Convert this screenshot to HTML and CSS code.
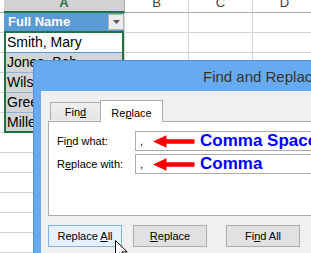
FILE: index.html
```html
<!DOCTYPE html>
<html>
<head>
<meta charset="utf-8">
<link rel="stylesheet" href="styles.css">
</head>
<body>
<div class="sheet">
  <div class="colhead">
    <div class="ch stub"></div>
    <div class="ch cha">A</div>
    <div class="ch chn">B</div>
    <div class="ch chn">C</div>
    <div class="ch chn">D</div>
  </div>
  <div class="rows">
    <div class="stubcol"></div>
    <div class="cola">
      <div class="thead"><span>Full Name</span><span class="dd"><svg width="7" height="4" viewBox="0 0 7 4"><path d="M0 0H7L3.5 4Z" fill="#5a5a5a"/></svg></span></div>
      <div class="sel">
        <div class="cell active">Smith, Mary</div>
        <div class="cell">Jones, Bob</div>
        <div class="cell">Wilson, Ann</div>
        <div class="cell">Greene, Tom</div>
        <div class="cell last">Miller, Sue</div>
      </div>
    </div>
    <div class="col"></div>
    <div class="col"></div>
    <div class="col"></div>
  </div>
</div>

<div class="dialog">
  <div class="titlebar">Find and Replace</div>
  <div class="dbody">
    <div class="tabs">
      <div class="tab">Fin<u>d</u></div>
      <div class="tab on">Re<u>p</u>lace</div>
    </div>
    <div class="panel">
      <div class="frow">
        <label class="lbl">Fi<u>n</u>d what:</label>
        <div class="inp">
          <span class="comma">,</span>
          <svg class="arrow" width="42" height="13" viewBox="0 0 42 13"><path d="M0 6.5L13.5 0.3V4.3H41.5V8.7H13.5V12.7Z" fill="#ff0000"/></svg>
          <span class="note">Comma Space</span>
        </div>
      </div>
      <div class="frow">
        <label class="lbl">R<u>e</u>place with:</label>
        <div class="inp">
          <span class="comma">,</span>
          <svg class="arrow" width="42" height="13" viewBox="0 0 42 13"><path d="M0 6.5L13.5 0.3V4.3H41.5V8.7H13.5V12.7Z" fill="#ff0000"/></svg>
          <span class="note">Comma</span>
        </div>
      </div>
    </div>
    <div class="btns">
      <div class="btn hot">Replace <u>A</u>ll</div>
      <div class="btn"><u>R</u>eplace</div>
      <div class="btn gap">Fi<u>n</u>d All</div>
      <div class="btn def">Find Next</div>
    </div>
  </div>
</div>

<svg class="cursor" width="13" height="20" viewBox="0 0 13 20"><path d="M0.5 0.5V16.5L4.5 12.8L7.3 19L9.6 18L6.9 11.9H12.2Z" fill="#fff" stroke="#000" stroke-width="1" stroke-linejoin="miter"/></svg>
</body>
</html>
```

FILE: styles.css
```css
* { box-sizing: border-box; margin: 0; padding: 0; }
html, body { width: 311px; height: 253px; overflow: hidden; background: #fff; }
body { position: relative; font-family: "Liberation Sans", Arial, sans-serif; }

/* spreadsheet */
.sheet { width: 340px; }
.colhead { display: flex; height: 13px; }
.ch {
  height: 13px; overflow: hidden; text-align: center;
  font-size: 13px; line-height: 5px; color: #444;
  border-bottom: 1px solid #ababab; border-right: 1px solid #d4d4d4;
  background: #fff;
}
.ch.stub { width: 4px; border-right: none; }
.ch.cha { width: 121px; background: #d2d2d2; color: #217346; font-weight: bold; border-bottom: 2px solid #217346; border-right-color: #ababab; }
.ch.chn { width: 64px; }

.rows {
  display: flex; height: 260px;
  background: repeating-linear-gradient(to bottom, #fff 0 19px, #d4d4d4 19px 20px);
}
.stubcol { width: 4px; }
.col { width: 64px; border-right: 1px solid #d4d4d4; }
.cola { width: 121px; border-right: 1px solid #d4d4d4; align-self: flex-start; }

.thead {
  height: 18px; background: #5b9bd5; color: #fff; font-weight: bold;
  font-size: 13px; line-height: 18px; padding-left: 4px;
  display: flex; align-items: center; justify-content: space-between; padding-right: 0;
}
.dd {
  width: 16px; height: 16px; background: #ececec; border: 1px solid #b4b4b4;
  display: flex; align-items: center; justify-content: center;
}
.sel { border: 2px solid #217346; margin-left: 0; }
.cell {
  height: 20px; border-bottom: 1px solid #8fb0d8; background: #d4d4d4;
  font-size: 14px; line-height: 19px; padding-left: 1px; color: #000; white-space: nowrap;
}
.cell.active { background: #fff; border-bottom-color: #5b9bd5; }
.cell.last { height: 18px; border-bottom: none; line-height: 18px; }

/* dialog (window overlay) */
.dialog {
  position: absolute; left: 33px; top: 60px; width: 320px; height: 210px;
  background: #68aaf0; border: 1px solid #4f8fdb; padding-left: 7px;
  display: flex; flex-direction: column;
}
.titlebar {
  height: 30px; padding-left: 162px; font-size: 15px; line-height: 31px;
  color: #333; white-space: nowrap;
}
.dbody { flex: 1; background: #f0f0f0; padding: 8px 0 0 7px; font-size: 11px; color: #000; }

.tabs { display: flex; align-items: flex-end; height: 22px; position: relative; z-index: 1; }
.tab {
  height: 18px; width: 50px; margin-left: 2px; margin-bottom: 1px;
  border: 1px solid #acacac; border-bottom: none; border-right: none;
  background: linear-gradient(#f0f0f0, #e5e5e5);
  text-align: center; line-height: 18px;
}
.tab.on {
  height: 22px; width: 63px; margin-left: 0; margin-bottom: -1px;
  background: #fff; border-right: 1px solid #acacac; line-height: 24px;
}
.panel {
  height: 95px; background: #fff; border: 1px solid #acacac; border-right: none;
  padding: 9px 0 0 8px; display: flex; flex-direction: column; gap: 3px;
}
.frow { display: flex; align-items: center; }
.lbl { width: 78px; white-space: nowrap; }
.inp {
  flex: 1; height: 20px; border: 1px solid #acacac; border-right: none; background: #fff;
  display: flex; align-items: center; padding-left: 4px; white-space: nowrap; overflow: visible;
}
.comma { width: 13px; font-size: 11px; line-height: 18px; }
.arrow { flex: none; display: block; }
.note { margin-left: 5px; color: #0000ff; font-weight: bold; font-size: 17px; line-height: 18px; }

.btns { display: flex; gap: 11px; margin-top: 9px; white-space: nowrap; }
.btn {
  width: 74px; height: 22px; flex: none; background: #e1e1e1; border: 1px solid #adadad;
  text-align: center; line-height: 20px;
}
.btn.hot { background: #e5f1fb; border-color: #7eb4ea; }
.btn.gap { margin-left: 8px; }
.btn.def { border-color: #3c7fd1; }

.cursor { position: absolute; left: 115px; top: 240px; }
```
